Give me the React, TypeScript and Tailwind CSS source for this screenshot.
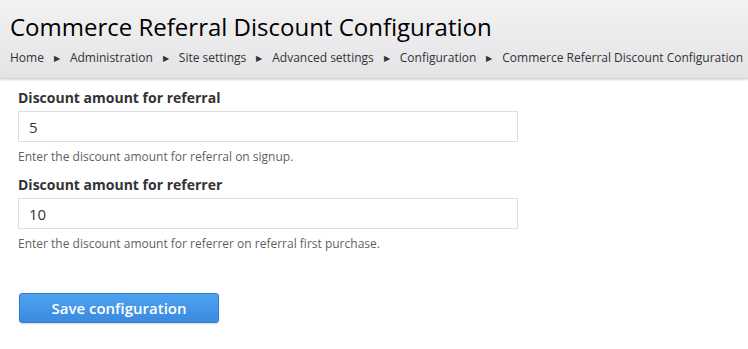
import React from 'react';

const crumbs = ['Home', 'Administration', 'Site settings', 'Advanced settings', 'Configuration', 'Commerce Referral Discount Configuration'];

function Field({ label, value, help }: { label: string; value: string; help: string }) {
  return (
    <div className="mb-[10px]">
      <label className="block text-[14px] font-bold leading-[20px] text-[#333] mb-[3px]">{label}</label>
      <input
        type="text"
        defaultValue={value}
        className="block w-[500px] h-[31px] px-[10px] border border-[#ddd] bg-white text-[15px] text-[#333] outline-none"
      />
      <p className="mt-[7px] text-[12px] leading-[16px] text-[#5f5f5f]">{help}</p>
    </div>
  );
}

export default function App() {
  return (
    <div className="w-[748px] h-[349px] bg-white overflow-hidden" style={{ fontFamily: '"Open Sans", "Liberation Sans", sans-serif' }}>
      <div className="bg-gradient-to-b from-[#f2f2f2] to-[#e4e3e6] h-[79px] pl-[10px] pt-[10px] shadow-[0_1px_2px_rgba(0,0,0,0.15)] border-b border-[#d4d4d4]">
        <h1 className="text-[24px] leading-[34px] font-normal text-[#000] whitespace-nowrap">Commerce Referral Discount Configuration</h1>
        <ol className="flex items-center mt-[5px] text-[12px] leading-[18px] text-[#333] whitespace-nowrap">
          {crumbs.map((c, i) => (
            <li key={c} className="flex items-center">
              {i > 0 && <span className="text-[8px] text-[#333] mx-[10px]">▶</span>}
              {c}
            </li>
          ))}
        </ol>
      </div>
      <form className="pl-[18px] pt-[9px]">
        <Field label="Discount amount for referral" value="5" help="Enter the discount amount for referral on signup." />
        <Field label="Discount amount for referrer" value="10" help="Enter the discount amount for referrer on referral first purchase." />
        <button
          type="button"
          className="mt-[31px] ml-px w-[200px] h-[30px] rounded-[3px] border border-[#2a7fcf] bg-gradient-to-b from-[#4fa2f0] to-[#3a8ae0] text-white text-[15px] font-semibold shadow-[0_1px_2px_rgba(0,0,0,0.15)]"
        >
          Save configuration
        </button>
      </form>
    </div>
  );
}
